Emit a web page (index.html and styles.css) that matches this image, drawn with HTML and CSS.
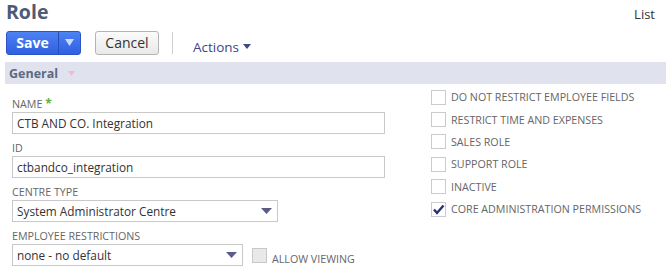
FILE: index.html
```html
<!DOCTYPE html>
<html>
<head>
<meta charset="utf-8">
<link rel="stylesheet" href="styles.css">
</head>
<body>
<div class="page">
  <div class="header">
    <h1 class="title">Role</h1>
    <a class="list-link">List</a>
  </div>
  <div class="toolbar">
    <div class="save-group">
      <span class="save-main">Save</span>
      <span class="save-menu"><svg width="9" height="7" viewBox="0 0 9 7"><path d="M0 0h9L4.5 7z" fill="#c9dcff"/></svg></span>
    </div>
    <span class="btn-cancel">Cancel</span>
    <span class="divider"></span>
    <span class="actions">Actions <svg width="8" height="5" viewBox="0 0 8 5"><path d="M0 0h8L4 5z" fill="#44497e"/></svg></span>
  </div>
  <div class="section-bar">
    <span class="section-title">General</span>
    <svg class="section-arrow" width="7" height="5" viewBox="0 0 7 5"><path d="M0 0h7L3.5 5z" fill="#f3b8d4"/></svg>
  </div>
  <div class="form">
    <div class="col-left">
      <div class="field">
        <label class="label">NAME <span class="req">*</span></label>
        <div class="input">CTB AND CO. Integration</div>
      </div>
      <div class="field">
        <label class="label">ID</label>
        <div class="input">ctbandco_integration</div>
      </div>
      <div class="field">
        <label class="label">CENTRE TYPE</label>
        <div class="select select-centre">System Administrator Centre<svg class="caret" width="11" height="6" viewBox="0 0 11 6"><path d="M0 0h11L5.5 6z" fill="#5b5c86"/></svg></div>
      </div>
      <div class="field">
        <label class="label">EMPLOYEE RESTRICTIONS</label>
        <div class="inline-row">
          <div class="select select-emp">none - no default<svg class="caret" width="11" height="6" viewBox="0 0 11 6"><path d="M0 0h11L5.5 6z" fill="#5b5c86"/></svg></div>
          <span class="box box-disabled"></span>
          <span class="allow">ALLOW VIEWING</span>
        </div>
      </div>
    </div>
    <div class="col-right">
      <div class="check-row"><span class="box"></span><span class="check-label">DO NOT RESTRICT EMPLOYEE FIELDS</span></div>
      <div class="check-row"><span class="box"></span><span class="check-label">RESTRICT TIME AND EXPENSES</span></div>
      <div class="check-row"><span class="box"></span><span class="check-label">SALES ROLE</span></div>
      <div class="check-row"><span class="box"></span><span class="check-label">SUPPORT ROLE</span></div>
      <div class="check-row"><span class="box"></span><span class="check-label">INACTIVE</span></div>
      <div class="check-row"><span class="box"><svg width="13" height="11" viewBox="0 0 13 11"><path d="M2 5.5l3 3.5L11.5 1.5" fill="none" stroke="#2b2f7a" stroke-width="2.4"/></svg></span><span class="check-label">CORE ADMINISTRATION PERMISSIONS</span></div>
    </div>
  </div>
</div>
</body>
</html>
```

FILE: styles.css
```css
* { box-sizing: border-box; }
html, body { margin: 0; padding: 0; background: #fff; }
body { font-family: "Open Sans", "DejaVu Sans", sans-serif; color: #333; }
.page { width: 666px; height: 276px; overflow: hidden; padding-left: 5px; }

.header { display: flex; justify-content: space-between; align-items: flex-start; height: 30px; padding-right: 11px; }
.title { margin: 0; font-size: 19.5px; font-weight: 700; color: #4d5b76; line-height: 24px; height: 26px; padding-left: 1px; }
.list-link { font-size: 13px; color: #333; line-height: 16px; margin-top: 6px; }

.toolbar { display: flex; align-items: center; height: 25px; padding-left: 1px; }
.save-group { display: flex; height: 24px; border: 1px solid #2b52c6; border-radius: 3px; background: linear-gradient(#4d82f4, #2f60e0); overflow: hidden; }
.save-main { width: 51px; color: #fff; font-weight: 700; font-size: 14px; line-height: 22px; text-align: center; }
.save-menu { width: 22px; border-left: 1px solid #2a4cb8; display: flex; align-items: center; justify-content: center; }
.btn-cancel { margin-left: 14px; height: 24px; width: 64px; border: 1px solid #b4b4b4; border-radius: 3px; background: linear-gradient(#fbfbfb, #e9e9e9); font-size: 14px; line-height: 22px; text-align: center; color: #333; }
.divider { margin-left: 13px; width: 1px; height: 22px; background: #cfcfcf; }
.actions { margin-left: 20px; margin-top: 8px; font-size: 13.5px; color: #3f4482; display: flex; align-items: center; gap: 4px; }

.section-bar { margin-top: 7px; height: 22px; background: #e0e3ee; display: flex; align-items: center; padding-left: 4px; }
.section-title { font-size: 12.5px; font-weight: 700; color: #5b6a84; }
.section-arrow { margin-left: 10px; }

.form { display: flex; padding-left: 7px; padding-top: 12px; }
.col-left { width: 373px; }
.col-right { margin-left: 46px; }

.field { display: flex; flex-direction: column; margin-bottom: 6px; }
.label { font-size: 10.7px; color: #666; line-height: 16px; height: 16px; }
.req { color: #5fae3a; font-weight: 700; font-size: 12px; }
.input, .select { height: 22px; border: 1px solid #c9c9c9; font-size: 11.8px; line-height: 20px; padding-left: 4px; color: #333; background: #fff; }
.select { position: relative; }
.caret { position: absolute; right: 5px; top: 7px; }
.select-centre { width: 266px; }
.select-emp { width: 231px; }
.inline-row { display: flex; align-items: flex-start; }
.box { width: 15px; height: 15px; border: 1px solid #cbcbcb; background: #fff; display: inline-flex; align-items: center; justify-content: center; flex: none; }
.box-disabled { margin-left: 9px; margin-top: 4px; background: #e9e9e9; border-color: #c8c8c8; }
.allow { margin-left: 5px; margin-top: 7px; font-size: 10.7px; color: #666; line-height: 16px; }

.check-row { display: flex; align-items: center; height: 22.4px; }
.check-row:first-child { margin-top: -10px; }
.check-label { margin-left: 5px; font-size: 10.7px; color: #666; }
```
